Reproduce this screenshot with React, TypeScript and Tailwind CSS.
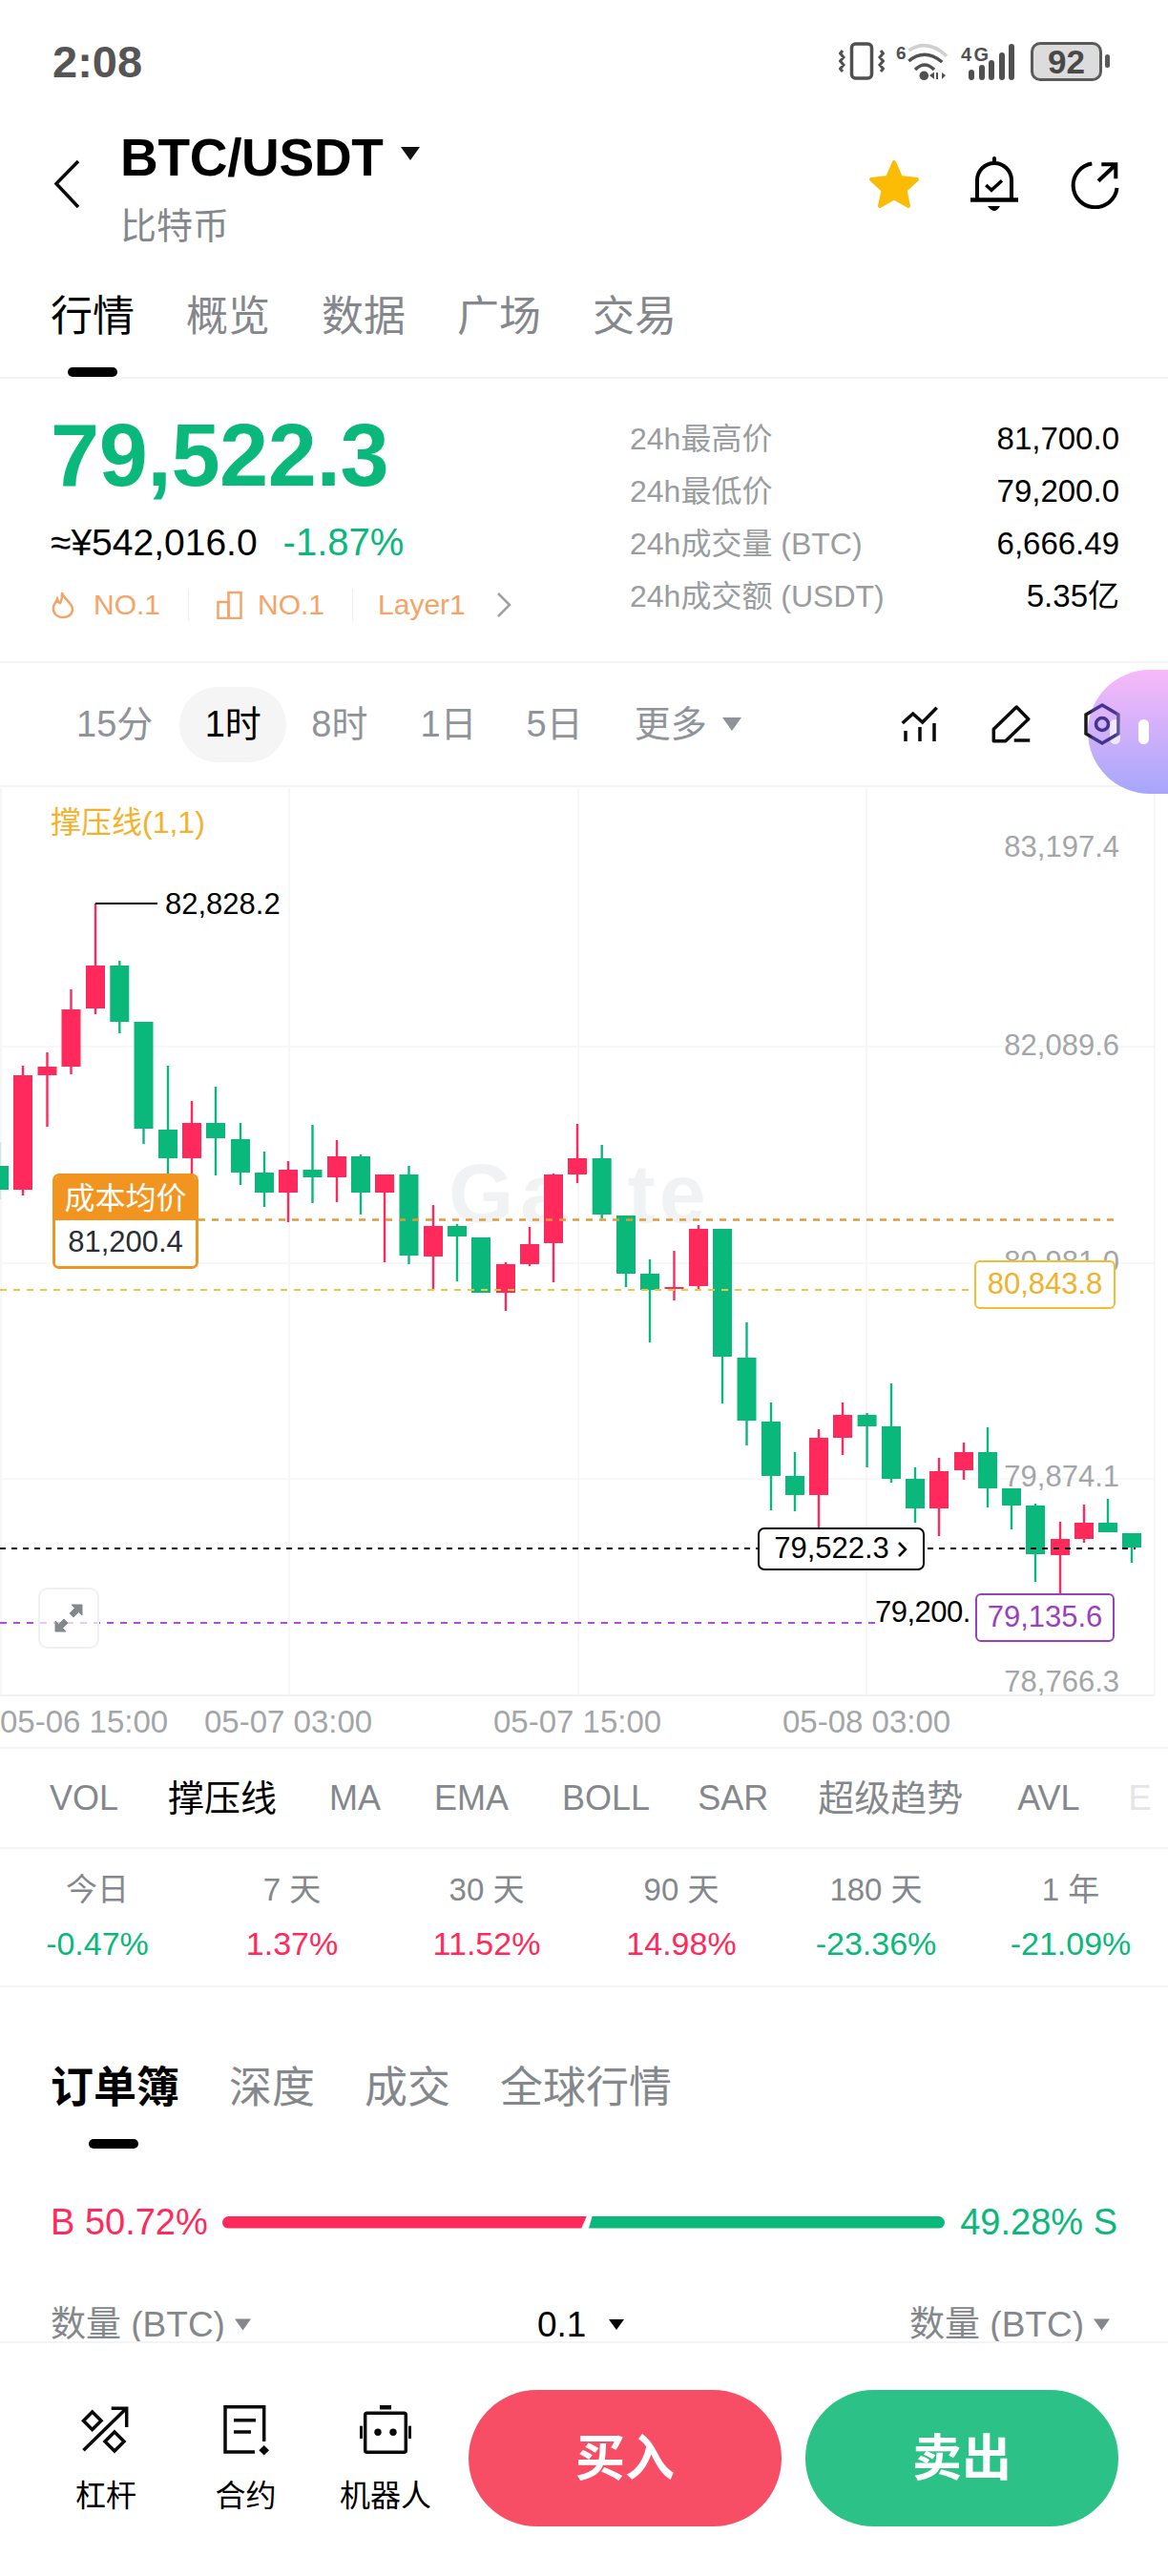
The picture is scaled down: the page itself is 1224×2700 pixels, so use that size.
import React from "react";

// [x, colour, wickTop, bodyTop, bodyBottom, wickBottom]
type C = [number, "g" | "r", number, number, number, number];
const candles: C[] = [
  [-1, "g", 1197, 1222, 1247, 1257],
  [24, "r", 1117, 1127, 1247, 1253],
  [49.5, "r", 1103, 1118, 1127, 1181],
  [74.5, "r", 1037, 1058, 1118, 1126],
  [100, "r", 947, 1012, 1057, 1063],
  [125.3, "g", 1007, 1012, 1071, 1083],
  [150.5, "g", 1071, 1071, 1183, 1199],
  [176, "g", 1117, 1184, 1214, 1240],
  [201, "r", 1154, 1177, 1214, 1240],
  [226, "g", 1139, 1177, 1193, 1232],
  [252, "g", 1177, 1194, 1229, 1242],
  [277, "g", 1207, 1229, 1250, 1265],
  [302, "r", 1217, 1226, 1250, 1281],
  [327.5, "g", 1179, 1226, 1234, 1261],
  [353, "r", 1195, 1212, 1234, 1260],
  [378, "g", 1210, 1212, 1250, 1273],
  [403, "r", 1231, 1231, 1250, 1323],
  [428.5, "g", 1222, 1231, 1316, 1325],
  [454, "r", 1263, 1285, 1317, 1352],
  [479, "g", 1283, 1285, 1296, 1343],
  [504, "g", 1297, 1297, 1355, 1355],
  [530, "r", 1323, 1325, 1355, 1374],
  [555, "r", 1286, 1304, 1325, 1327],
  [580, "r", 1230, 1231, 1303, 1344],
  [605, "r", 1178, 1214, 1231, 1240],
  [630.7, "g", 1200, 1214, 1273, 1277],
  [656, "g", 1274, 1274, 1335, 1349],
  [681, "g", 1320, 1335, 1352, 1407],
  [706.5, "r", 1311, 1349, 1351, 1363],
  [732, "r", 1284, 1288, 1348, 1353],
  [757, "g", 1288, 1288, 1422, 1471],
  [782.5, "g", 1386, 1423, 1489, 1515],
  [808, "g", 1470, 1490, 1547, 1583],
  [833, "g", 1522, 1547, 1567, 1584],
  [858, "r", 1498, 1507, 1567, 1604],
  [883, "r", 1470, 1483, 1507, 1525],
  [908.6, "g", 1481, 1483, 1495, 1538],
  [934, "g", 1450, 1495, 1550, 1554],
  [959, "g", 1538, 1550, 1581, 1596],
  [984, "r", 1528, 1542, 1581, 1610],
  [1010, "r", 1512, 1522, 1541, 1551],
  [1035, "g", 1496, 1522, 1560, 1580],
  [1060, "g", 1560, 1560, 1578, 1603],
  [1085, "g", 1576, 1578, 1629, 1658],
  [1111, "r", 1595, 1613, 1630, 1670],
  [1136, "r", 1577, 1596, 1613, 1617],
  [1161, "g", 1571, 1596, 1606, 1606],
  [1186, "g", 1607, 1607, 1622, 1638],
];

const GREEN = "#0bb87c";
const RED = "#ff2a5b";

function Chart() {
  return (
    <svg className="absolute left-0 top-0" width="1224" height="953" viewBox="0 825 1224 953">
      {[1097, 1324, 1550].map((y) => (
        <line key={y} x1="0" x2="1210" y1={y} y2={y} stroke="#f3f4f5" strokeWidth="1.5" />
      ))}
      <line x1="0" x2="1210" y1="1777" y2="1777" stroke="#f0f1f2" strokeWidth="2" />
      {[1, 303, 606, 908, 1210].map((x) => (
        <line key={x} x1={x} x2={x} y1="826" y2="1778" stroke="#f3f4f5" strokeWidth="1.5" />
      ))}
      {candles.map(([x, c, wt, bt, bb, wb], i) => (
        <g key={i} fill={c === "g" ? GREEN : RED}>
          <rect x={x - 1.2} y={wt} width="2.4" height={wb - wt} />
          <rect x={x - 10} y={bt} width="20" height={bb - bt} />
        </g>
      ))}
      <path d="M100 947H165" stroke="#000" strokeWidth="2" />
      <line x1="208" x2="1169" y1="1278.5" y2="1278.5" stroke="#dd9b3c" strokeWidth="2.5" strokeDasharray="7 7" />
      <line x1="0" x2="1015" y1="1352" y2="1352" stroke="#ecc93f" strokeWidth="2" strokeDasharray="7 7" />
      <line x1="0" x2="1190" y1="1623" y2="1623" stroke="#000" strokeWidth="2" strokeDasharray="6 6" />
      <line x1="0" x2="1018" y1="1701" y2="1701" stroke="#b44bdc" strokeWidth="2" strokeDasharray="7 7" />
    </svg>
  );
}

function Caret({ className }: { className: string }) {
  return (
    <svg viewBox="0 0 20 14" className={className} fill="currentColor">
      <path d="M0 0H20L10 14Z" />
    </svg>
  );
}

function AxisLabel({ top, text }: { top: string; text: string }) {
  return (
    <div className={`absolute right-[51px] h-[36px] text-[31px] leading-[36px] text-[#a3a6a8] ${top}`}>{text}</div>
  );
}

function Tabs({ items, active }: { items: string[]; active: string }) {
  return (
    <div className="flex gap-[54px]">
      {items.map((t) => (
        <span key={t} className={t === active ? "text-black" : "text-[#84888c]"}>
          {t}
        </span>
      ))}
    </div>
  );
}

export default function App() {
  return (
    <div className="relative h-[2700px] w-[1224px] overflow-hidden bg-white text-black [font-family:'Liberation_Sans','Noto_Sans_CJK_SC',sans-serif]">
      <div className="h-[2454px] overflow-hidden">
        {/* Status bar */}
        <div className="flex h-[128px] items-center justify-between pl-[55px] pr-[61px]">
          <span className="text-[47px] font-bold leading-none text-[#555555]">2:08</span>
          <div className="flex items-center text-[#505050]">
            <svg width="48" height="40" viewBox="0 0 48 40" fill="none" stroke="#505050">
              <rect x="13.500" y="2" width="21" height="36" rx="4" strokeWidth="3.500" />
              <path d="M4 9l-2.500 3L5 16l-3.500 4L5 24l-3.500 4L4 31M44 9l2.500 3L43 16l3.500 4L43 24l3.500 4L44 31" strokeWidth="3" />
            </svg>
            <svg className="ml-[12px]" width="56" height="41" viewBox="0 0 56 41" fill="none">
              <path d="M13.300 9Q33-4 53 14.700" stroke="#cfcfcf" strokeWidth="3.500" />
              <path d="M13.300 20Q30 6 48.300 21M20 29Q30 19 40 29" stroke="#505050" strokeWidth="3.500" />
              <circle cx="29.300" cy="35.300" r="4.800" fill="#505050" />
              <path d="M35 35l5-3.500V39ZM48 39V32L52 35Z" fill="#505050" />
              <rect x="42" y="32" width="2" height="7" fill="#505050" />
              <text x="0" y="18" fontSize="19" fontWeight="700" fill="#505050" fontFamily="'Liberation Sans',sans-serif">6</text>
            </svg>
            <svg className="ml-[12px]" width="57" height="41" viewBox="0 0 57 41" fill="#505050">
              <rect x="8" y="29" width="6" height="11" rx="3" />
              <rect x="19" y="24" width="6" height="16" rx="3" />
              <rect x="29" y="19" width="6" height="21" rx="3" />
              <rect x="40" y="11" width="6" height="29" rx="3" />
              <rect x="50" y="2" width="6" height="38" rx="3" />
              <text x="0" y="20" fontSize="20" fontWeight="700" fontFamily="'Liberation Sans',sans-serif" textLength="29">4G</text>
            </svg>
            <div className="ml-[16px] flex h-[41px] w-[75px] items-center justify-center rounded-[10px] border-[3px] border-[#5a5a5a] bg-[#dcdcdc] text-[35px] font-bold leading-none text-[#484848]">
              92
            </div>
            <div className="ml-[3px] h-[14px] w-[5px] rounded-full bg-[#5a5a5a]" />
          </div>
        </div>

        {/* Header */}
        <div className="flex h-[130px] items-center">
          <svg className="ml-[55px] shrink-0" width="30" height="54" viewBox="0 0 30 54" fill="none" stroke="#0a0a0a" strokeWidth="3.500">
            <path d="M27 3L4 26.500L27 51" />
          </svg>
          <div className="ml-[41px] pt-[8px]">
            <div className="flex h-[60px] items-center">
              <span className="text-[55px] font-bold leading-none tracking-[-0.3px]">BTC/USDT</span>
              <Caret className="ml-[17px] mt-[-8px] h-[14px] w-[22px] text-[#111]" />
            </div>
            <div className="mt-[20px] h-[44px] text-[38px] leading-[44px] text-[#84888c]">比特币</div>
          </div>
          <div className="ml-auto flex items-center">
            <svg width="56" height="54" viewBox="0 0 56 54" fill="#fcbc05" stroke="#fcbc05" strokeWidth="4" strokeLinejoin="round">
              <path d="M28 4L35 20L52 22L39.500 33.500L43 50L28 41.500L13 50L16.500 33.500L4 22L21 20Z" />
            </svg>
            <svg className="ml-[50px]" width="54" height="58" viewBox="0 0 54 58" fill="none" stroke="#000" strokeWidth="4">
              <path d="M9 45V25A18 18 0 0 1 45 25V45" />
              <path d="M2 45.500H52" strokeWidth="4.500" />
              <path d="M27 2V7" strokeWidth="4" strokeLinecap="round" />
              <path d="M20 52H33Q30 57 27 57T20 52Z" fill="#000" stroke="none" />
              <path d="M18.300 30L24 35.300L35 25.300" strokeWidth="3.500" />
            </svg>
            <svg className="ml-[53px] mr-[50px]" width="52" height="52" viewBox="0 0 52 52" fill="none" stroke="#000" strokeWidth="4">
              <path d="M22.300 4.500A23 23 0 1 0 48.500 30" />
              <path d="M29 22.700L46.700 6M32.300 5.300H47.300V20.300" strokeWidth="4" />
            </svg>
          </div>
        </div>

        {/* Main tabs */}
        <div className="h-[139px] border-b-2 border-[#f4f4f4] pl-[53px] pt-[52px]">
          <div className="text-[44px] leading-[44px]">
            <Tabs items={["行情", "概览", "数据", "广场", "交易"]} active="行情" />
          </div>
          <div className="ml-[18px] mt-[31px] h-[10px] w-[52px] rounded-full bg-black" />
        </div>

        {/* Price */}
        <div className="flex h-[296px] justify-between pl-[53px] pr-[51px] pt-[35px]">
          <div>
            <div className="h-[90px] text-[92px] font-bold leading-[90px] tracking-[-0.5px] text-[#0bb87c]">79,522.3</div>
            <div className="mt-[23px] flex h-[46px] items-center leading-none">
              <span className="text-[39px]">≈¥542,016.0</span>
              <span className="ml-[27px] text-[40px] text-[#0bb87c]">-1.87%</span>
            </div>
            <div className="mt-[23px] flex h-[40px] items-center text-[30px] leading-none text-[#f5a468]">
              <svg width="26" height="30" viewBox="0 0 26 30" fill="none" stroke="#f5a468" strokeWidth="2.500">
                <path d="M12 2C13 8 19 10 22 16C25 23 20 28 13 28C6 28 2 23 3 17C4 13 6 12 7 9C8 12 9 13 10 13C12 11 12 6 12 2Z" />
              </svg>
              <span className="ml-[19px]">NO.1</span>
              <div className="ml-[29px] h-[34px] w-[1px] bg-[#eeeeee]" />
              <svg className="ml-[29px]" width="27" height="30" viewBox="0 0 27 30" fill="none" stroke="#f5a468" strokeWidth="2.500">
                <rect x="1.500" y="12" width="11" height="17" />
                <rect x="12.500" y="2" width="13" height="27" />
              </svg>
              <span className="ml-[16px]">NO.1</span>
              <div className="ml-[29px] h-[34px] w-[1px] bg-[#eeeeee]" />
              <span className="ml-[26px]">Layer1</span>
              <svg className="ml-[32px]" width="16" height="28" viewBox="0 0 16 28" fill="none" stroke="#a0a0a0" strokeWidth="2.500">
                <path d="M2 2L14 14L2 26" />
              </svg>
            </div>
          </div>
          <div className="w-[513px] text-[33px]">
            {[
              ["24h最高价", "81,700.0"],
              ["24h最低价", "79,200.0"],
              ["24h成交量 (BTC)", "6,666.49"],
              ["24h成交额 (USDT)", "5.35亿"],
            ].map(([k, v]) => (
              <div key={k} className="flex h-[55px] items-center justify-between">
                <span className="text-[32px] text-[#9a9da0]">{k}</span>
                <span>{v}</span>
              </div>
            ))}
          </div>
        </div>

        {/* Period row */}
        <div className="flex h-[132px] items-center border-y-2 border-[#f4f4f4] pl-[80px] text-[38px] leading-none text-[#90939a]">
          <span>15分</span>
          <span className="ml-[28px] flex h-[79px] w-[112px] items-center justify-center rounded-full bg-[#f5f5f5] text-black">1时</span>
          <span className="ml-[26px]">8时</span>
          <span className="ml-[55px]">1日</span>
          <span className="ml-[52px]">5日</span>
          <span className="ml-[54px]">更多</span>
          <Caret className="ml-[16px] h-[14px] w-[20px] text-[#90939a]" />
          <svg className="ml-[165px]" width="44" height="42" viewBox="0 0 44 42" fill="none" stroke="#0a0a0a" strokeWidth="3.500">
            <path d="M3.700 20L14.700 10L24.700 19L39.700 3.700" />
            <path d="M7 28V39M22 24V39M37 20V39" />
          </svg>
          <svg className="ml-[52px]" width="44" height="42" viewBox="0 0 44 42" fill="none" stroke="#0a0a0a" strokeWidth="3.500" strokeLinejoin="round">
            <path d="M27.300 3L39.700 15.700L15.700 38.700H3.300V26.300Z" />
            <path d="M24.700 38H41.300" />
          </svg>
          <svg className="relative z-10 ml-[51px]" width="44" height="46" viewBox="0 0 44 46" fill="none" strokeWidth="3.500">
            <defs>
              <linearGradient id="hex" gradientUnits="userSpaceOnUse" x1="0" y1="0" x2="44" y2="0">
                <stop offset="0.2" stopColor="#1a1a1a" />
                <stop offset="0.28" stopColor="#43358f" />
                <stop offset="0.8" stopColor="#43358f" />
                <stop offset="1" stopColor="#8a85a8" />
              </linearGradient>
            </defs>
            <path d="M22 3L39 13V33L22 43L5 33V13Z" stroke="url(#hex)" />
            <circle cx="22" cy="23" r="6.500" stroke="#43358f" />
          </svg>
        </div>

        {/* Chart */}
        <div className="relative h-[953px]">
          <div className="absolute left-[470px] top-[382px] flex text-[88px] font-bold leading-none text-[#f1f2f3]">
            <span>G</span>
            <span className="ml-[7px]">a</span>
            <span className="ml-[63px]">t</span>
            <span className="ml-[4px]">e</span>
          </div>
          <Chart />
          <div className="absolute left-[53px] top-[19px] h-[36px] text-[32px] leading-[36px] text-[#f3b22c]">撑压线(1,1)</div>
          <div className="absolute left-[173px] top-[105px] h-[36px] text-[31px] leading-[36px]">82,828.2</div>
          <AxisLabel top="top-[45px]" text="83,197.4" />
          <AxisLabel top="top-[253px]" text="82,089.6" />
          <AxisLabel top="top-[480px]" text="80,981.0" />
          <AxisLabel top="top-[705px]" text="79,874.1" />
          <AxisLabel top="top-[920px]" text="78,766.3" />

          <div className="absolute left-[55px] top-[405px] w-[153px] overflow-hidden rounded-[7px] border-[3px] border-[#f29420] text-center text-[31px] leading-[46px]">
            <div className="bg-[#f29420] text-[32px] text-white">成本均价</div>
            <div className="h-[48px] bg-white text-[#2a2d33]">81,200.4</div>
          </div>
          <div className="absolute left-[1021px] top-[496px] flex h-[51px] w-[148px] items-center justify-center rounded-[6px] border-2 border-[#f3bd2f] bg-white text-[31px] text-[#f0b22b]">
            80,843.8
          </div>
          <div className="absolute left-[794px] top-[776px] flex h-[45px] w-[175px] items-center justify-center rounded-[7px] border-2 border-black bg-white text-[31px]">
            79,522.3
            <svg className="ml-[8px]" width="12" height="18" viewBox="0 0 12 18" fill="none" stroke="#000" strokeWidth="2.500">
              <path d="M2 2L9 9L2 16" />
            </svg>
          </div>
          <div className="absolute left-[917px] top-[847px] h-[36px] bg-white text-[31px] leading-[36px] tracking-[-0.5px]">79,200.</div>
          <div className="absolute left-[1022px] top-[845px] flex h-[51px] w-[146px] items-center justify-center rounded-[6px] border-2 border-[#9a3fc0] bg-white text-[31px] text-[#9a3fc0]">
            79,135.6
          </div>
          <div className="absolute left-[40px] top-[839px] flex h-[64px] w-[64px] items-center justify-center rounded-[10px] border-2 border-[#f0f0f0] bg-white/70">
            <svg width="34" height="34" viewBox="0 0 34 34" fill="#85888b" stroke="#85888b">
              <path d="M20 3H31V14L27.500 10.500L22 16L18 12L23.500 6.500Z" strokeWidth="1" />
              <path d="M14 31H3V20L6.500 23.500L12 18L16 22L10.500 27.500Z" strokeWidth="1" />
            </svg>
          </div>
        </div>

        {/* Time axis */}
        <div className="flex h-[55px] items-center border-b-2 border-[#f4f4f4] text-[33px] leading-none text-[#a3a6a8]">
          <span className="w-[176px] whitespace-nowrap">05-06 15:00</span>
          <span className="ml-[38px] w-[176px] whitespace-nowrap">05-07 03:00</span>
          <span className="ml-[127px] w-[176px] whitespace-nowrap">05-07 15:00</span>
          <span className="ml-[127px] w-[176px] whitespace-nowrap">05-08 03:00</span>
        </div>

        {/* Indicator tabs */}
        <div className="flex h-[105px] items-center overflow-hidden whitespace-nowrap border-b-2 border-[#f4f4f4] pl-[52px] text-[36px] leading-none text-[#84888c]">
          <span>VOL</span>
          <span className="ml-[52px] text-[38px] text-black">撑压线</span>
          <span className="ml-[55px]">MA</span>
          <span className="ml-[56px]">EMA</span>
          <span className="ml-[56px]">BOLL</span>
          <span className="ml-[50px]">SAR</span>
          <span className="ml-[52px] text-[38px]">超级趋势</span>
          <span className="ml-[57px]">AVL</span>
          <span className="ml-[51px] text-[#e4e5e6]">E</span>
        </div>

        {/* Returns */}
        <div className="grid h-[145px] grid-cols-6 border-b-2 border-[#f4f4f4] pt-[21px] text-center leading-[44px]">
          {[
            ["今日", "-0.47%", "g"],
            ["7 天", "1.37%", "r"],
            ["30 天", "11.52%", "r"],
            ["90 天", "14.98%", "r"],
            ["180 天", "-23.36%", "g"],
            ["1 年", "-21.09%", "g"],
          ].map(([k, v, c]) => (
            <div key={k}>
              <div className="text-[33px] text-[#84888c]">{k}</div>
              <div className={`mt-[12px] text-[34px] ${c === "g" ? "text-[#0bb87c]" : "text-[#ff2a5b]"}`}>{v}</div>
            </div>
          ))}
        </div>

        {/* Order book */}
        <div className="pl-[53px] pr-[53px] pt-[75px]">
          <div className="flex h-[60px] items-center gap-[52px] text-[45px] leading-none text-[#84888c]">
            <span className="font-bold text-black">订单簿</span>
            <span>深度</span>
            <span>成交</span>
            <span>全球行情</span>
          </div>
          <div className="ml-[40px] mt-[24px] h-[10px] w-[52px] rounded-full bg-black" />
          <div className="mt-[55px] flex h-[44px] items-center text-[38px] leading-none">
            <span className="w-[180px] whitespace-nowrap text-[#ff2a5b]">B 50.72%</span>
            <div className="h-[13px] w-[382px] rounded-l-full bg-[#ff2a5b] [clip-path:polygon(0_0,100%_0,98.5%_100%,0_100%)]" />
            <div className="ml-[2px] h-[13px] w-[373px] rounded-r-full bg-[#0bb87c] [clip-path:polygon(1%_0,100%_0,100%_100%,0_100%)]" />
            <span className="ml-auto whitespace-nowrap text-[#0bb87c]">49.28% S</span>
          </div>
          <div className="mt-[63px] flex h-[44px] items-center text-[37px] leading-none text-[#84888c]">
            <span>数量 (BTC)</span>
            <Caret className="ml-[10px] h-[13px] w-[17px]" />
            <span className="ml-[300px] text-black">0.1</span>
            <Caret className="ml-[24px] h-[13px] w-[16px] text-black" />
            <span className="ml-auto">数量 (BTC)</span>
            <Caret className="ml-[10px] mr-[8px] h-[13px] w-[17px]" />
          </div>
        </div>
      </div>

      {/* Footer */}
      <div className="flex h-[246px] border-t-2 border-[#f4f4f4] pl-[38px] pt-[49px]">
        <div className="w-[146px] pt-[14px] text-center text-[32px]">
          <svg className="mx-auto" width="56" height="56" viewBox="0 0 56 56" fill="none" stroke="#0a0a0a" strokeWidth="3.500">
            <path d="M4.500 49.300L48.700 6M33.700 5.300H49.700V25" />
            <path d="M13.700 9L23 18.300L13.700 27.600L4.500 18.300Z" />
            <path d="M37 30L47 40L37 50L27 40Z" />
          </svg>
          <div className="mt-[23px] h-[36px] leading-[36px]">杠杆</div>
        </div>
        <div className="w-[147px] pt-[14px] text-center text-[32px]">
          <svg className="mx-auto" width="56" height="56" viewBox="0 0 56 56" fill="none" stroke="#0a0a0a" strokeWidth="3.500">
            <path d="M46.700 40V3.700H6V51H37" />
            <path d="M15 17.700H38M15 30H33" />
            <path d="M46.700 44L52 49.300L46.700 54.600L41.400 49.300Z" fill="#0a0a0a" stroke="none" />
          </svg>
          <div className="mt-[23px] h-[36px] leading-[36px]">合约</div>
        </div>
        <div className="w-[146px] pt-[14px] text-center text-[32px]">
          <svg className="mx-auto" width="56" height="56" viewBox="0 0 56 56" fill="#0a0a0a">
            <rect x="6.700" y="10.300" width="42.600" height="41" rx="2" fill="none" stroke="#0a0a0a" strokeWidth="3.500" />
            <rect x="1" y="23.700" width="3" height="13.300" />
            <rect x="52" y="23.700" width="3" height="13.300" />
            <rect x="22" y="2" width="12" height="4.500" />
            <circle cx="20" cy="30.300" r="3.700" />
            <circle cx="36" cy="30.300" r="3.700" />
          </svg>
          <div className="mt-[23px] h-[36px] whitespace-nowrap leading-[36px]">机器人</div>
        </div>
        <div className="ml-[14px] flex h-[143px] w-[328px] items-center justify-center rounded-full bg-[#f84e65] text-[52px] font-bold text-white">买入</div>
        <div className="ml-[25px] flex h-[143px] w-[328px] items-center justify-center rounded-full bg-[#2bc187] text-[52px] font-bold text-white">卖出</div>
      </div>

      {/* Floating widget */}
      <div className="absolute left-[1140px] top-[702px] flex h-[130px] w-[84px] items-center gap-[19px] rounded-l-[65px] bg-gradient-to-b from-[#f8b9f8] to-[#a6a6fb] pl-[23px]">
        <div className="h-[26px] w-[11px] rounded-full bg-white/70" />
        <div className="h-[26px] w-[11px] rounded-full bg-white" />
      </div>
    </div>
  );
}
